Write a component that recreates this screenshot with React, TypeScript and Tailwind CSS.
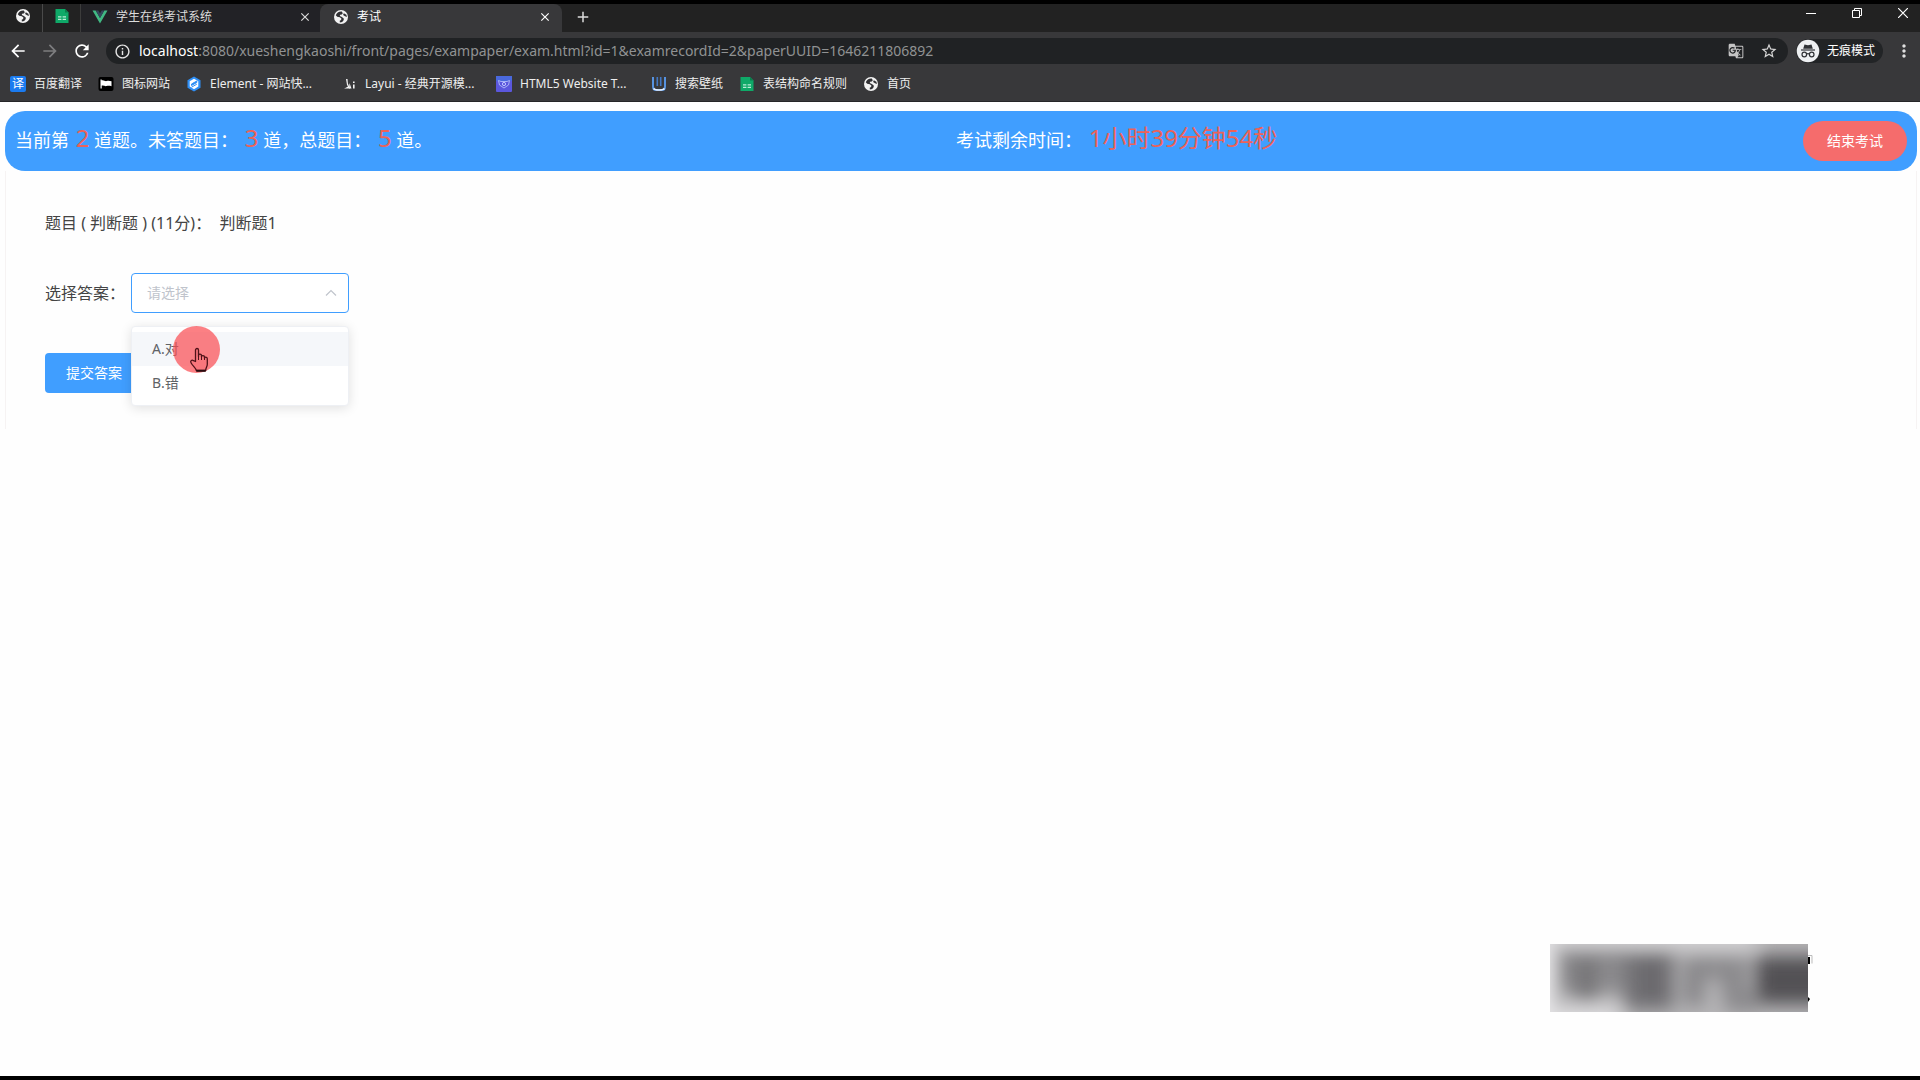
import React from "react";
import {
  MdArrowBack,
  MdArrowForward,
  MdRefresh,
  MdInfoOutline,
  MdStarBorder,
  MdMoreVert,
  MdAdd,
  MdClose,
  MdGTranslate,
} from "react-icons/md";

function GlobeIcon() {
  return (
    <svg viewBox="0 0 16 16" className="size-4 shrink-0" aria-hidden="true">
      <circle cx="8" cy="8" r="7" fill="#f2f2f2" />
      <path
        d="M8.800 2.600C6 2.300 3.700 3.800 2.800 6.200l1.400 1.600 2.600.4 1.600 1.300-.3 1.600-1.400.7.200 1.600 2.300-.4 1.600-2-.2-1.800-2.200-1.400-1.600-.8.300-1.300 1.700-.3 1-1.200z"
        fill="#303033"
      />
      <path d="M10.800 4.200l2.600 1.600.5 2.200-1.900-.7-1.900-1.200z" fill="#303033" />
    </svg>
  );
}

function SheetIcon() {
  return (
    <svg viewBox="0 0 16 16" className="size-4 shrink-0" aria-hidden="true">
      <path d="M1.500 1h9.500l3.500 3.500V15h-13z" fill="#0fa968" />
      <path d="M11 1v3.500h3.500z" fill="#0a7d4c" />
      <path d="M4 8.200h3.400v1.300H4zM8.600 8.200H12v1.300H8.600zM4 10.800h3.400v1.200H4zM8.600 10.800H12v1.200H8.600z" fill="#b9ecd5" />
    </svg>
  );
}

function VueIcon() {
  return (
    <svg viewBox="0 0 16 16" className="size-4 shrink-0" aria-hidden="true">
      <path d="M0.500 1.500h3.200L8 9l4.300-7.500h3.200L8 14.500z" fill="#41b883" />
      <path d="M3.700 1.500h2.600L8 4.500l1.700-3h2.600L8 9z" fill="#35495e" />
    </svg>
  );
}

function TranslateBadge() {
  return (
    <span className="flex size-4 shrink-0 items-center justify-center rounded-[2px] bg-[#1b7bf0] text-xs leading-4 text-white">
      译
    </span>
  );
}

function FlagIcon() {
  return (
    <svg viewBox="0 0 16 16" className="size-4 shrink-0" aria-hidden="true">
      <rect x=".5" y="1" width="15" height="14" rx="2" fill="#000" />
      <path d="M2.500 3.500h1.200v9H2.500zM3.500 4.500c2-1 3.500 1 5 .6 1.500-.5 3-.5 5 .2v5c-2-.8-3.500-.6-5-.2-1.500.5-3-1-5-.3z" fill="#fff" />
    </svg>
  );
}

function ElementIcon() {
  return (
    <svg viewBox="0 0 16 16" className="size-4 shrink-0" aria-hidden="true">
      <path d="M8 .5l6.500 3.700v7.600L8 15.500l-6.500-3.700V4.200z" fill="#2f8ff5" />
      <path d="M8 2.800l4.300 2.400v5.400L8 13.200l-4.300-2.600V5.200z" fill="#fff" />
      <path d="M10.800 5L5.500 8v1.500l5.300-3zM10.800 8.200L5.500 11.200" fill="#2f8ff5" stroke="#2f8ff5" strokeWidth="1" />
    </svg>
  );
}

function LayuiIcon() {
  return (
    <svg viewBox="0 0 16 16" className="size-4 shrink-0" aria-hidden="true">
      <path d="M5 3h1.500l.4 4.500L9 12.500H3l1.800-.7L7 10.500 6 9z" fill="#f4f4f4" />
      <path d="M8.500 7l2 5.500H8zM12 8.500h1.600v4H12zM12 5.500h1.600v1.600H12z" fill="#f4f4f4" />
    </svg>
  );
}

function Html5Icon() {
  return (
    <svg viewBox="0 0 16 16" className="size-4 shrink-0" aria-hidden="true">
      <rect width="16" height="16" rx="1" fill="#5b57dd" />
      <rect width="16" height="5" fill="#4a69dd" />
      <path d="M2.500 4.500l2.500 1h6l2.500-1-1 4.500L8 12 3.500 9z" fill="none" stroke="#a9b3f7" />
      <circle cx="8" cy="8" r="1.600" fill="none" stroke="#c3c9ff" />
    </svg>
  );
}

function WallpaperIcon() {
  return (
    <svg viewBox="0 0 16 16" className="size-4 shrink-0" aria-hidden="true">
      <path d="M2 1v9.500C2 13 3 14 5 14h6c2 0 3-1 3-3.500V1" fill="none" stroke="#5793e0" strokeWidth="2" />
      <path d="M6.300 1v9M9.700 1v9" stroke="#4278c4" strokeWidth="1.600" />
      <path d="M2.500 12.500C4 14.500 12 14.500 13.500 12.500" fill="none" stroke="#e6f0ff" strokeWidth="1.600" />
    </svg>
  );
}

function IncognitoIcon() {
  return (
    <svg viewBox="0 0 24 24" className="size-6 shrink-0" aria-hidden="true">
      <circle cx="12" cy="12" r="11.300" fill="#eef0f2" />
      <path d="M8.500 5.500l3.500.7 3.500-.7 1.300 4.300H7.200z" fill="#303236" />
      <path d="M5 11h14" stroke="#303236" strokeWidth="1.200" />
      <g fill="none" stroke="#303236" strokeWidth="1.200">
        <circle cx="8.300" cy="15.500" r="2.300" />
        <circle cx="15.700" cy="15.500" r="2.300" />
        <path d="M10.600 15q1.400-.8 2.800 0" />
      </g>
    </svg>
  );
}

function HandCursor() {
  return (
    <svg viewBox="0 0 20 26" className="h-[26px] w-5" aria-hidden="true">
      <path
        d="M6.500 14.500V3c0-2 3-2 3 0v6.500V8.300c0-1.600 3-1.600 3 .2v1.200c0-1.600 3-1.500 3 .3v1.200c0-1.500 2.800-1.400 2.800.5v5.500c0 2.500-1.600 3.800-1.600 6.300H7.300c0-2.200-3.600-4.500-5.300-7.800-1-2 1-3.200 2.500-2z"
        fill="#f8767c"
        stroke="#4e1218"
        strokeWidth="1.300"
        strokeLinejoin="round"
      />
      <path d="M9.500 9v4M12.500 9.500v3.500M15.500 10.500V13" stroke="#4e1218" />
      <path d="M7.300 23.800h9.400" stroke="#2a0c10" strokeWidth="2" />
    </svg>
  );
}

function BlurredStamp() {
  return (
    <svg viewBox="0 0 264 68" className="absolute bottom-16 right-[106px] h-[68px] w-[264px]" aria-hidden="true">
      <defs>
        <filter id="soft" x="-30%" y="-30%" width="160%" height="160%">
          <feGaussianBlur stdDeviation="9" />
        </filter>
        <clipPath id="frame">
          <rect width="258" height="68" />
        </clipPath>
      </defs>
      <g clipPath="url(#frame)">
        <rect width="258" height="68" fill="#b6b5b7" />
        <g filter="url(#soft)">
          <rect x="8" y="6" width="66" height="42" fill="#8a898c" />
          <rect x="26" y="14" width="20" height="42" fill="#747376" />
          <rect x="74" y="8" width="50" height="58" fill="#777679" />
          <rect x="84" y="14" width="34" height="44" fill="#6c6b6e" />
          <rect x="134" y="14" width="20" height="48" fill="#858487" />
          <path d="M140 14h58v20h-58z" fill="#88878a" />
          <path d="M166 14h20l24 54h-34z" fill="#8a898c" />
          <rect x="206" y="12" width="84" height="48" fill="#525154" />
          <rect x="-20" y="-10" width="22" height="90" fill="#f2f1f3" />
          <rect x="-10" y="-18" width="215" height="20" fill="#dddcde" />
          <rect x="-10" y="64" width="80" height="20" fill="#e4e3e5" />
        </g>
      </g>
      <path d="M258 13h2v7h-2zM258 53l2 2-2 3z" fill="#000" />
      <path d="M258 11.500h4v8" fill="none" stroke="#bbb" />
    </svg>
  );
}

const bookmarks = [
  { label: "百度翻译", icon: <TranslateBadge />, width: "w-[72px]" },
  { label: "图标网站", icon: <FlagIcon />, width: "w-[72px]" },
  { label: "Element - 网站快...", icon: <ElementIcon />, width: "w-[139px]" },
  { label: "Layui - 经典开源模...", icon: <LayuiIcon />, width: "w-[139px]" },
  { label: "HTML5 Website T...", icon: <Html5Icon />, width: "w-[139px]" },
  { label: "搜索壁纸", icon: <WallpaperIcon />, width: "w-[72px]" },
  { label: "表结构命名规则", icon: <SheetIcon />, width: "w-[108px]" },
  { label: "首页", icon: <GlobeIcon />, width: "w-12" },
];

function TabStrip() {
  return (
    <div className="flex h-7 items-stretch bg-[#222222] text-xs text-[#dcdcdc]">
      <button aria-label="首页" className="flex w-[43px] items-center justify-center border-r border-[#4a4a4a] pb-1 pl-1">
        <GlobeIcon />
      </button>
      <button aria-label="表格" className="flex w-[38px] items-center justify-center border-r border-[#3c3c3c] pb-1">
        <SheetIcon />
      </button>
      <div className="flex w-[239px] items-center bg-[#222226] pb-[3px] pl-[11px] pr-2">
        <button className="flex flex-1 items-center gap-2">
          <VueIcon />
          <span>学生在线考试系统</span>
        </button>
        <button aria-label="关闭标签页">
          <MdClose className="size-3.5" />
        </button>
      </div>
      <div className="flex w-[242px] items-center rounded-t-lg bg-[#38383a] pb-[3px] pl-[13px] pr-2.5 text-white">
        <button className="flex flex-1 items-center gap-2">
          <GlobeIcon />
          <span>考试</span>
        </button>
        <button aria-label="关闭当前标签页">
          <MdClose className="size-3.5" />
        </button>
      </div>
      <button aria-label="新建标签页" className="ml-3 flex items-center pb-[3px]">
        <MdAdd className="size-[18px]" />
      </button>
      <div className="ml-auto flex items-start gap-9 pr-3 pt-1 text-white">
        <button aria-label="最小化">
          <svg viewBox="0 0 10 10" className="size-2.5">
            <path d="M0 5.500h10" stroke="currentColor" />
          </svg>
        </button>
        <button aria-label="还原">
          <svg viewBox="0 0 10 10" className="size-2.5">
            <path d="M.5 2.500h7v7h-7zM2.500 2.500v-2h7v7h-2" fill="none" stroke="currentColor" />
          </svg>
        </button>
        <button aria-label="关闭">
          <svg viewBox="0 0 10 10" className="size-2.5">
            <path d="M0 0l10 10M10 0L0 10" stroke="currentColor" strokeWidth="1.200" />
          </svg>
        </button>
      </div>
    </div>
  );
}

function Toolbar() {
  return (
    <div className="flex h-[38px] items-center bg-[#38383a] pl-2 pr-1.5">
      <div className="flex w-[98px] items-center gap-3 text-white">
        <button aria-label="后退">
          <MdArrowBack className="size-5" />
        </button>
        <button aria-label="前进" className="text-[#7d7d7f]">
          <MdArrowForward className="size-5" />
        </button>
        <button aria-label="刷新">
          <MdRefresh className="size-5" />
        </button>
      </div>
      <div className="flex h-[26px] flex-1 items-center rounded-full bg-[#202224] pl-2 pr-2.5">
        <MdInfoOutline className="size-[17px] text-[#e6e6e6]" />
        <a href="#exam" className="ml-2 flex-1 whitespace-nowrap text-sm text-[#909293]">
          <span className="text-white">localhost</span>
          :8080/xueshengkaoshi/front/pages/exampaper/exam.html?id=1&amp;examrecordId=2&amp;paperUUID=1646211806892
        </a>
        <button aria-label="翻译此页">
          <MdGTranslate className="size-4 text-[#c4c4c4]" />
        </button>
        <button aria-label="收藏" className="ml-4">
          <MdStarBorder className="size-[18px] text-[#d6d6d6]" />
        </button>
      </div>
      <button className="ml-2 flex h-6 items-center gap-[7px] rounded-full bg-[#222426] pr-2 text-xs text-white">
        <IncognitoIcon />
        无痕模式
      </button>
      <button aria-label="更多" className="ml-[11px]">
        <MdMoreVert className="size-5 text-[#e0e0e0]" />
      </button>
    </div>
  );
}

function Bookmarks() {
  return (
    <nav className="flex h-8 items-center gap-4 border-b border-[#252527] bg-[#38383a] px-2.5 pb-[3px] text-xs text-[#eeeeee]">
      {bookmarks.map((b) => (
        <a key={b.label} href="#bookmark" className={`flex items-center gap-2 whitespace-nowrap ${b.width}`}>
          {b.icon}
          <span>{b.label}</span>
        </a>
      ))}
    </nav>
  );
}

function Red({ children }: { children: React.ReactNode }) {
  return <span className="ml-0.5 text-2xl leading-6 text-[#ec6259]">{children}</span>;
}

function StatusBar() {
  return (
    <header className="flex h-15 items-center rounded-[20px] bg-[#409eff] px-2.5 text-lg text-white">
      <p className="flex-1 whitespace-pre pb-0.5">
        当前第 <Red>2</Red> 道题。未答题目： <Red>3</Red> 道，总题目： <Red>5</Red> 道。
      </p>
      <div className="-ml-2.5 flex flex-1 items-center justify-between">
        <p className="whitespace-pre pb-0.5">
          考试剩余时间： <Red>1小时39分钟54秒</Red>
        </p>
        <button className="h-10 rounded-full bg-[#f56c6c] px-6 text-sm">结束考试</button>
      </div>
    </header>
  );
}

function AnswerSelect() {
  return (
    <div className="relative w-[218px]">
      <select
        id="answer"
        defaultValue=""
        className="block h-10 w-full appearance-none rounded border border-[#409eff] bg-white px-[15px] text-sm text-[#c0c4cc] outline-none"
      >
        <option value="">请选择</option>
        <option>A.对</option>
        <option>B.错</option>
      </select>
      <svg viewBox="0 0 12 8" className="pointer-events-none absolute right-3 top-4 h-2 w-3" aria-hidden="true">
        <path d="M1 6.500l5-5 5 5" fill="none" stroke="#c0c4cc" strokeWidth="1.200" />
      </svg>
      <ul className="absolute left-0 top-[53px] z-10 w-full rounded border border-[#eef0f4] bg-white py-[5px] text-sm text-[#606266] shadow-[0_2px_12px_rgba(0,0,0,0.12)]">
        <li>
          <button className="h-[34px] w-full bg-[#f5f7fa] px-5 text-left">A.对</button>
        </li>
        <li>
          <button className="h-[34px] w-full px-5 text-left">B.错</button>
        </li>
      </ul>
      <span className="pointer-events-none absolute left-[42px] top-[53px] z-20 flex size-[47px] items-end justify-end rounded-full bg-[#fb4a50]/70 pr-[11px]">
        <HandCursor />
      </span>
    </div>
  );
}

export default function App() {
  return (
    <div className="flex min-h-screen flex-col border-y-4 border-black bg-[#fefefe] font-['Noto_Sans','Noto_Sans_CJK_SC',sans-serif]">
      <TabStrip />
      <Toolbar />
      <Bookmarks />
      <main className="relative flex-1 pb-16 pl-[5px] pr-[3px] pt-[9px]">
        <StatusBar />
        <form className="border-x border-[#f6f3f3] px-[39px] pb-9 pt-10 text-base text-[#444444]">
          <p className="whitespace-pre">题目 ( 判断题 ) (11分)：  判断题1</p>
          <div className="mt-[38px] flex items-center">
            <label htmlFor="answer" className="w-[86px]">
              选择答案：
            </label>
            <AnswerSelect />
          </div>
          <button type="button" className="mt-10 h-10 rounded bg-[#409eff] px-[21px] text-sm text-white">
            提交答案
          </button>
        </form>
        <BlurredStamp />
      </main>
    </div>
  );
}
